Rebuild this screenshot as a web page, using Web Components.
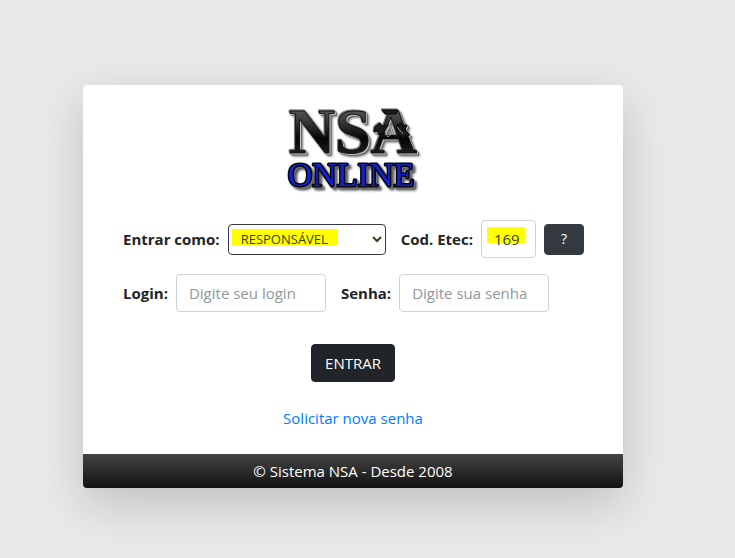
<!DOCTYPE html>
<html lang="pt-BR">
<head>
<meta charset="utf-8">
<meta name="viewport" content="width=device-width, initial-scale=1">
<title>NSA Online</title>
<style>
  body {
    margin: 0;
    min-height: 100vh;
    background: #e9e9e9;
    color: #212529;
    font: 15px/24px "Open Sans", "Noto Sans", sans-serif;
  }
</style>
</head>
<body>
<login-page></login-page>

<template id="nsa-logo">
  <style>
    :host { display: block; }
    svg { display: block; margin: 0 auto; overflow: visible; }
    text { font-family: "Liberation Serif", serif; text-anchor: middle; stroke-linejoin: round; }
    .top { font-size: 64px; font-weight: 700; fill: url(#steel); stroke: #151515; stroke-width: 1px; }
    .bottom { font-size: 34px; fill: url(#blue); stroke: #05050f; stroke-width: 3px; paint-order: stroke; }
    .barbs { fill: #1c1c1c; stroke: #050505; stroke-width: 1px; }
    .shine { fill: none; stroke: #8d8d8d; stroke-width: 1px; }
    .raised { filter: drop-shadow(-1px -1px 0 #777) drop-shadow(1px 1px 0 #c4c4c4) drop-shadow(1px 1px 0 #666) drop-shadow(1px 1px 1px #777); }
    .glow { filter: drop-shadow(1px 1px 0 #777) drop-shadow(2px 2px 1px #555); }
  </style>
  <svg width="132" height="84" viewBox="0 0 132 84" role="img" aria-label="NSA Online">
    <defs>
      <linearGradient id="steel" x1="0" y1="0" x2="0" y2="1">
        <stop offset="0" stop-color="#777"/>
        <stop offset=".35" stop-color="#3a3a3a"/>
        <stop offset=".6" stop-color="#050505"/>
        <stop offset="1" stop-color="#333"/>
      </linearGradient>
      <linearGradient id="blue" x1="0" y1="0" x2="0" y2="1">
        <stop offset="0" stop-color="#1526a8"/>
        <stop offset="1" stop-color="#101fe8"/>
      </linearGradient>
    </defs>
    <g class="raised">
      <text class="top" x="66" y="44">NSA</text>
      <!-- cap and side barbs of the A -->
      <path class="barbs" d="M95 1h16l-2 4H98z"/>
      <path class="barbs" d="M88 18l5-4 2 3 6-1-4 8-5 2-1-4-4 1z"/>
      <path class="barbs" d="M109 17l5-3 1 3 5-1-2 5 5 5-5 1-1 3-6-5z"/>
      <path class="shine" d="M102 16l-4 7 3 5 4-4zM110 18l6 7"/>
    </g>
    <g class="glow"><text class="bottom" x="64" y="77">ONLINE</text></g>
  </svg>
</template>

<template id="login-field">
  <style>
    :host { display: flex; align-items: center; gap: 8px; }
    label { font-weight: 700; white-space: nowrap; }
    input, select {
      box-sizing: border-box;
      margin: 0;
      border: 1px solid #ced4da;
      border-radius: 4px;
      background: #fff no-repeat 5px 6px;
      color: #495057;
      font: inherit;
    }
    input { width: var(--control-width, 150px); height: 38px; padding: 6px 12px; }
    input::placeholder { color: #8f979e; opacity: 1; }
    select {
      width: 158px;
      height: 31px;
      padding: 4px 0 4px 8px;
      border-color: #343a40;
      background-position: 3px 4px;
      font-size: 13px;
    }
    :host([marked]) input, :host([marked]) select {
      background-image: linear-gradient(#ff0, #ff0);
      background-size: var(--mark-width) 16px;
      color: #3c3e1c;
    }
  </style>
  <label for="control"></label>
</template>

<template id="action-button">
  <style>
    :host { display: block; }
    button {
      display: block;
      height: 38px;
      padding: 0 13px;
      border: 1px solid #212529;
      border-radius: 4px;
      background: #212529;
      color: #fff;
      font: inherit;
      cursor: pointer;
    }
    :host([small]) button {
      height: 31px;
      padding: 0 16px;
      border-color: #343a40;
      background: #343a40;
      font-size: 14px;
    }
  </style>
  <button type="button"><slot></slot></button>
</template>

<template id="login-card">
  <style>
    :host {
      display: block;
      border-radius: 4px;
      background: #fff;
      box-shadow: 0 16px 48px rgba(0, 0, 0, .175);
    }
    .body { padding: 24px 38px; }
    footer {
      padding: 5px;
      border-radius: 0 0 4px 4px;
      background: linear-gradient(#444, #111);
      color: #fff;
      text-align: center;
    }
  </style>
  <div class="body"><slot></slot></div>
  <footer><slot name="footer"></slot></footer>
</template>

<template id="login-page">
  <style>
    :host { display: block; padding: 85px 112px 70px 83px; }
    nsa-logo { margin-bottom: 27px; }
    .row { display: flex; align-items: center; column-gap: 15px; margin-bottom: 16px; padding-left: 2px; }
    .code { display: flex; align-items: center; gap: 8px; }
    .role { --mark-width: 106px; }
    .etec { --control-width: 55px; --mark-width: 38px; }
    .actions { display: flex; flex-direction: column; align-items: center; gap: 24px; margin-top: 32px; }
    a { color: #007bff; text-decoration: none; }
    a:hover { text-decoration: underline; }
  </style>
  <login-card>
    <nsa-logo></nsa-logo>
    <div class="row">
      <login-field class="role" label="Entrar como:" options="RESPONSÁVEL" marked></login-field>
      <div class="code">
        <login-field class="etec" label="Cod. Etec:" value="169" marked></login-field>
        <action-button small>?</action-button>
      </div>
    </div>
    <div class="row">
      <login-field label="Login:" placeholder="Digite seu login"></login-field>
      <login-field label="Senha:" type="password" placeholder="Digite sua senha"></login-field>
    </div>
    <div class="actions">
      <action-button>ENTRAR</action-button>
      <a href="#senha">Solicitar nova senha</a>
    </div>
    <span slot="footer">© Sistema NSA - Desde 2008</span>
  </login-card>
</template>

<script>
class TemplateElement extends HTMLElement {
  constructor() {
    super();
    const template = document.getElementById(this.localName);
    this.attachShadow({ mode: 'open' }).appendChild(template.content.cloneNode(true));
  }
}

class LoginField extends TemplateElement {
  connectedCallback() {
    if (this.control) return;
    this.shadowRoot.querySelector('label').textContent = this.getAttribute('label');
    this.control = this.hasAttribute('options') ? this._createSelect() : this._createInput();
    this.control.id = 'control';
    this.shadowRoot.appendChild(this.control);
  }

  _createSelect() {
    const select = document.createElement('select');
    this.getAttribute('options').split(',').forEach((name) => select.add(new Option(name)));
    return select;
  }

  _createInput() {
    const input = document.createElement('input');
    input.type = this.getAttribute('type') || 'text';
    input.placeholder = this.getAttribute('placeholder') || '';
    input.value = this.getAttribute('value') || '';
    return input;
  }
}

customElements.define('nsa-logo', class extends TemplateElement {});
customElements.define('login-field', LoginField);
customElements.define('action-button', class extends TemplateElement {});
customElements.define('login-card', class extends TemplateElement {});
customElements.define('login-page', class extends TemplateElement {});
</script>
</body>
</html>
